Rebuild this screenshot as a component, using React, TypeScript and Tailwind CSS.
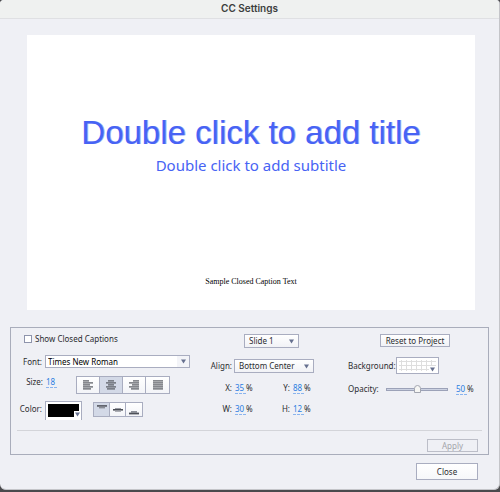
import { useState } from 'react';
import type { ReactNode } from 'react';

type HAlign = 'left' | 'center' | 'right' | 'justify';
type VAlign = 'top' | 'middle' | 'bottom';

const H_LINES: Record<HAlign, number[][]> = {
  left: [[0, 6], [0, 10], [0, 7], [0, 10], [0, 8]],
  center: [[2, 6], [0, 10], [2, 6], [0, 10], [1, 8]],
  right: [[4, 6], [0, 10], [3, 7], [0, 10], [2, 8]],
  justify: [[0, 10], [0, 10], [0, 10], [0, 10], [0, 10]],
};

const Arrow = () => (
  <svg width="5" height="5" viewBox="0 0 5 5" className="shrink-0">
    <path d="M0 0.5h5L2.5 4.5z" fill="#66708f" />
  </svg>
);

const HAlignIcon = ({ kind }: { kind: HAlign }) => (
  <svg width="10" height="10" viewBox="0 0 10 10">
    {H_LINES[kind].map(([x, w], i) => (
      <rect key={i} x={x} y={i * 2 + 0.3} width={w} height="1.2" fill="#55585f" />
    ))}
  </svg>
);

const VAlignIcon = ({ kind }: { kind: VAlign }) => (
  <svg width="10" height="12" viewBox="0 0 10 12">
    {kind === 'top' && (
      <>
        <rect x="0" y="1" width="10" height="1.8" fill="#62656e" />
        <rect x="2" y="2.8" width="6" height="1.6" fill="#8a8d96" />
      </>
    )}
    {kind === 'middle' && (
      <>
        <rect x="2" y="4" width="6" height="1" fill="#9a9ca4" />
        <rect x="0" y="5" width="10" height="1.6" fill="#4c4f57" />
        <rect x="2" y="6.6" width="6" height="1.2" fill="#9a9ca4" />
      </>
    )}
    {kind === 'bottom' && (
      <>
        <rect x="2" y="7" width="6" height="1.6" fill="#8a8d96" />
        <rect x="0" y="8.6" width="10" height="1.8" fill="#4c4f57" />
      </>
    )}
  </svg>
);

interface SelectBoxProps {
  id: string;
  label?: string;
  options: string[];
  className: string;
  inner: string;
  arrow?: string;
}

const SelectBox = ({ id, label, options, className, inner, arrow = 'right-1' }: SelectBoxProps) => (
  <div className={`relative border border-[#a9adc0] ${className}`}>
    <select
      id={id}
      aria-label={label}
      className={`block h-full w-full appearance-none bg-transparent outline-none ${inner}`}
    >
      {options.map((o) => (
        <option key={o}>{o}</option>
      ))}
    </select>
    <span className={`pointer-events-none absolute inset-y-0 flex items-center ${arrow}`}>
      <Arrow />
    </span>
  </div>
);

interface HotValueProps {
  id: string;
  label: string;
  value: string;
  labelClass?: string;
  unit?: string;
}

// Etiqueta + valor editável sublinhado
const HotValue = ({ id, label, value, labelClass, unit }: HotValueProps) => (
  <div className="flex h-3 items-center">
    {labelClass && (
      <label htmlFor={id} className={labelClass}>
        {label}
      </label>
    )}
    <input
      id={id}
      type="text"
      aria-label={labelClass ? undefined : label}
      defaultValue={value}
      className="h-[11px] w-[11px] border-b border-dashed border-[#8ab4ee] bg-transparent text-[#2a7de1] outline-none"
    />
    {unit && <span>{unit}</span>}
  </div>
);

interface SegmentProps {
  label: string;
  active: boolean;
  onClick: () => void;
  className: string;
  children: ReactNode;
}

const Segment = ({ label, active, onClick, className, children }: SegmentProps) => (
  <button
    aria-label={label}
    aria-pressed={active}
    onClick={onClick}
    className={`flex items-center justify-center border-r border-[#a9adc0] last:border-r-0 ${className} ${
      active ? 'bg-[#d3d9e7]' : 'bg-linear-to-b from-white to-[#f3f4f8]'
    }`}
  >
    {children}
  </button>
);

export default function App() {
  const [hAlign, setHAlign] = useState<HAlign>('center');
  const [vAlign, setVAlign] = useState<VAlign>('top');

  return (
    <div className="min-h-screen bg-[#4a4a4d] pb-0.5">
      <div className="flex min-h-[calc(100vh-2px)] flex-col overflow-hidden rounded-t-sm rounded-b-md border-r border-b border-[#c4c5c9] bg-[#eff0f5] font-['Noto_Sans',sans-serif] text-[8px] leading-3 text-[#2b2c30]">
        <header className="h-[19px] border-b border-[#dfe0e3] bg-[#eff1f0] text-center">
          <h1 className="font-['Inter',sans-serif] text-[10px] leading-4 font-semibold text-[#3c3e3d]">
            CC Settings
          </h1>
        </header>

        {/* Preview */}
        <section className="mt-4 mr-6 ml-[27px] flex h-[275px] flex-col items-center bg-white pt-[78px] text-[#4763f4]">
          <h2 className="font-['Liberation_Sans',sans-serif] text-[33px] leading-10 whitespace-nowrap [text-shadow:1px_0_#4763f480]">
            Double click to add title
          </h2>
          <p className="text-[15px] leading-6">Double click to add subtitle</p>
          <p className="mt-auto mb-[22px] font-['Liberation_Serif',serif] text-[8px] leading-3 text-black">
            Sample Closed Caption Text
          </p>
        </section>

        {/* Caption settings */}
        <section className="mt-[17px] mr-[10px] ml-[10px] border border-[#a9adbb]">
          <div className="grid grid-cols-[197fr_137fr_143fr] pt-[5px]">
            <div>
              <label className="ml-[13px] flex h-3 items-center gap-[3px]">
                <input
                  type="checkbox"
                  className="h-2 w-2 appearance-none border border-[#8e94ac] bg-white checked:bg-[#66708f]"
                />
                Show Closed Captions
              </label>

              <div className="mt-[10px] flex items-center gap-[3px]">
                <label htmlFor="font" className="w-[31px] text-right">
                  Font:
                </label>
                <SelectBox
                  id="font"
                  options={['Times New Roman', 'Arial', 'Verdana']}
                  className="h-[13px] w-[145px] bg-white"
                  inner="pl-0.5 text-black"
                  arrow="right-0 w-3 justify-center bg-[#f3f4f8]"
                />
              </div>

              <div className="mt-2 flex h-[18px]">
                <HotValue id="size" label="Size:" value="18" labelClass="mr-[3px] w-8 text-right" />
                <div className="ml-[19px] flex border border-[#a9adc0]">
                  {(['left', 'center', 'right', 'justify'] as HAlign[]).map((k) => (
                    <Segment
                      key={k}
                      label={`Align ${k}`}
                      active={hAlign === k}
                      onClick={() => setHAlign(k)}
                      className="w-[23px]"
                    >
                      <HAlignIcon kind={k} />
                    </Segment>
                  ))}
                </div>
              </div>

              <div className="mt-[7px] flex h-[19px]">
                <span className="mt-0.5 mr-[3px] w-[31px] text-right">Color:</span>
                <button
                  aria-label="Text color"
                  className="relative w-[37px] border border-b-0 border-[#a9adc0] bg-white px-0.5 pt-px pb-[3px]"
                >
                  <span className="block h-[13px] bg-black" />
                  <span className="absolute right-0 bottom-0.5 flex h-[7px] w-[7px] items-center justify-center bg-white">
                    <Arrow />
                  </span>
                </button>
                <div className="mt-px ml-[11px] flex h-[15px] border border-[#a9adc0]">
                  {(['top', 'middle', 'bottom'] as VAlign[]).map((k) => (
                    <Segment
                      key={k}
                      label={`Align ${k}`}
                      active={vAlign === k}
                      onClick={() => setVAlign(k)}
                      className="w-4"
                    >
                      <VAlignIcon kind={k} />
                    </Segment>
                  ))}
                </div>
              </div>
            </div>

            <div className="pt-px">
              <SelectBox
                id="slide"
                label="Slide"
                options={['Slide 1', 'Slide 2']}
                className="ml-9 h-[14px] w-[55px] bg-linear-to-b from-white to-[#f1f2f6]"
                inner="pl-1"
              />
              <div className="mt-[11px] flex items-center gap-0.5">
                <label htmlFor="align" className="w-6 text-right">
                  Align:
                </label>
                <SelectBox
                  id="align"
                  options={['Bottom Center', 'Bottom Left', 'Top Center']}
                  className="h-[14px] w-[80px] bg-linear-to-b from-white to-[#f1f2f6]"
                  inner="pl-1"
                />
              </div>
              <div className="mt-[9px] grid grid-cols-[58px_auto] gap-y-[9px]">
                <HotValue id="x" label="X:" value="35" unit="%" labelClass="mr-[3px] w-6 text-right" />
                <HotValue id="y" label="Y:" value="88" unit="%" labelClass="mr-[3px] w-6 text-right" />
                <HotValue id="w" label="W:" value="30" unit="%" labelClass="mr-[3px] w-6 text-right" />
                <HotValue id="h" label="H:" value="12" unit="%" labelClass="mr-[3px] w-6 text-right" />
              </div>
            </div>

            <div className="pt-px pl-[3px]">
              <button className="ml-8 block h-[13px] w-[70px] border border-[#a9adc0] bg-linear-to-b from-white to-[#f1f2f6] leading-[11px]">
                Reset to Project
              </button>
              <div className="mt-[10px] flex items-center">
                <span className="w-12">Background:</span>
                <button
                  aria-label="Background color"
                  className="relative h-[17px] w-[43px] border border-[#a9adc0] bg-white p-0.5"
                >
                  <svg width="37" height="11" viewBox="0 0 37 11" className="block">
                    <path
                      d="M0 1.5h37M0 5.5h37M0 9.5h37M2.5 0v11M7.5 0v11M12.5 0v11M17.5 0v11M22.5 0v11M27.5 0v11M32.5 0v11"
                      stroke="#dedede"
                      fill="none"
                    />
                  </svg>
                  <span className="absolute right-0.5 bottom-0 flex h-[7px] w-[7px] items-center justify-center bg-white">
                    <Arrow />
                  </span>
                </button>
              </div>
              <div className="mt-[9px] flex h-3 items-center">
                <label htmlFor="opacity" className="w-[38px]">
                  Opacity:
                </label>
                <input
                  id="opacity"
                  type="range"
                  defaultValue={50}
                  className="mr-2 h-2 w-[62px] appearance-none bg-transparent [&::-webkit-slider-runnable-track]:h-[3px] [&::-webkit-slider-runnable-track]:border [&::-webkit-slider-runnable-track]:border-[#9ca2b8] [&::-webkit-slider-runnable-track]:bg-[#ccd2e2] [&::-webkit-slider-thumb]:-mt-[4px] [&::-webkit-slider-thumb]:h-2 [&::-webkit-slider-thumb]:w-[7px] [&::-webkit-slider-thumb]:appearance-none [&::-webkit-slider-thumb]:rounded-t-full [&::-webkit-slider-thumb]:border [&::-webkit-slider-thumb]:border-[#a3a6b0] [&::-webkit-slider-thumb]:bg-[#f6f6f4]"
                />
                <HotValue id="opacity-value" label="Opacity percent" value="50" unit="%" />
              </div>
            </div>
          </div>

          <hr className="mx-[6px] mt-[10px] border-[#d3d4d9]" />
          <div className="mt-2 mr-[10px] mb-0.5 flex justify-end">
            <button
              disabled
              className="h-[13px] w-[51px] border border-[#bcbec8] leading-[11px] text-[#a3a4aa]"
            >
              Apply
            </button>
          </div>
        </section>

        <footer className="mt-2 mr-[21px] mb-2 flex justify-end">
          <button className="h-[17px] w-[62px] border border-[#a9adc0] bg-linear-to-b from-white to-[#f6f7fa] leading-[15px]">
            Close
          </button>
        </footer>
      </div>
    </div>
  );
}
